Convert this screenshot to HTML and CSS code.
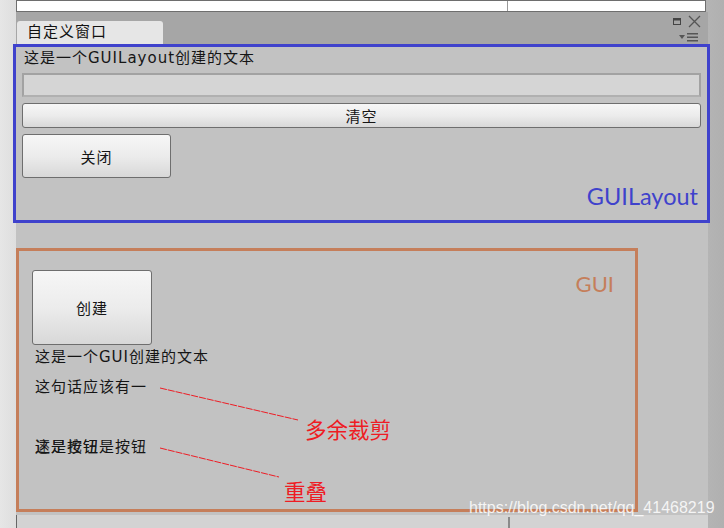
FILE: index.html
```html
<!DOCTYPE html>
<html lang="zh">
<head>
<meta charset="utf-8">
<link rel="stylesheet" href="styles.css">
</head>
<body>
<div class="screen">
  <div class="topbar"><span class="topbar-tick"></span></div>
  <div class="window">
    <div class="tabbar">
      <div class="tab">自定义窗口</div>
      <div class="tab-tools">
        <div class="tool-row">
          <svg class="ico-max" width="8" height="7" viewBox="0 0 8 7"><rect x="0.5" y="0.5" width="7" height="6" fill="none" stroke="#444" stroke-width="1"/><rect x="0.5" y="0.5" width="7" height="2" fill="#444"/></svg>
          <svg class="ico-close" width="13" height="13" viewBox="0 0 13 13"><path d="M1 1 L12 12 M12 1 L1 12" stroke="#555" stroke-width="1.3" fill="none"/></svg>
        </div>
        <div class="tool-row">
          <svg width="20" height="9" viewBox="0 0 20 9"><path d="M0 2 L6 2 L3 6 Z" fill="#555"/><rect x="8" y="0" width="11" height="1.5" fill="#555"/><rect x="8" y="3.5" width="11" height="1.5" fill="#555"/><rect x="8" y="7" width="11" height="1.5" fill="#555"/></svg>
        </div>
      </div>
    </div>
    <div class="layout-box">
      <div class="ui-label">这是一个GUILayout创建的文本</div>
      <div class="textfield"></div>
      <div class="btn btn-wide">清空</div>
      <div class="btn btn-close">关闭</div>
      <div class="tag tag-blue">GUILayout</div>
    </div>
    <div class="gui-box">
      <div class="tag tag-orange">GUI</div>
      <div class="btn btn-create">创建</div>
      <div class="ui-label gui-text">这是一个GUI创建的文本</div>
      <div class="ui-label gui-clip">这句话应该有一</div>
      <div class="overlap">
        <span class="ui-label ov-a">这是按钮是按钮</span>
        <span class="ui-label ov-b">还是也钮</span>
      </div>
    </div>
  </div>
  <div class="below"><span class="below-tick"></span></div>
</div>
<svg class="marks" width="724" height="528" viewBox="0 0 724 528">
  <line x1="160" y1="388" x2="298" y2="420" stroke="#ee1c24" stroke-width="1" stroke-dasharray="7 1"/>
  <line x1="160" y1="448" x2="279" y2="477" stroke="#ee1c24" stroke-width="1" stroke-dasharray="7 1"/>
</svg>
<div class="note note-clip">多余裁剪</div>
<div class="note note-overlap">重叠</div>
<div class="watermark">https://blog.csdn.net/qq_41468219</div>
</body>
</html>
```
FILE: styles.css
```css
html, body {
  margin: 0;
  padding: 0;
}
body {
  width: 724px;
  height: 528px;
  overflow: hidden;
  position: relative;
  background: linear-gradient(to right, #e6e6e6 0, #dedede 16px, #b4b4b4 708px, #b0b0b0 724px);
  font-family: "DejaVu Sans", "Noto Sans CJK SC", sans-serif;
}
.screen {
  display: flex;
  flex-direction: column;
}
.topbar {
  margin-left: 16px;
  width: 688px;
  height: 10px;
  background: #ffffff;
  border: 1px solid #6e6e6e;
  position: relative;
}
.topbar-tick {
  position: absolute;
  left: 490px;
  top: 0;
  width: 1px;
  height: 10px;
  background: #999;
}
.window {
  margin-left: 16px;
  width: 692px;
  height: 503px;
  background: #c2c2c2;
  display: flex;
  flex-direction: column;
}
.tabbar {
  height: 32px;
  background: #a6a6a6;
  display: flex;
  justify-content: space-between;
  align-items: flex-end;
}
.tab {
  margin-left: 1px;
  width: 146px;
  height: 23px;
  box-sizing: border-box;
  background: #e6e6e6;
  border-radius: 3px 3px 0 0;
  font-size: 15px;
  letter-spacing: 1px;
  line-height: 23px;
  padding-left: 10px;
  color: #111;
}
.tab-tools {
  display: flex;
  flex-direction: column;
  align-items: flex-end;
  padding-right: 9px;
  height: 32px;
  justify-content: space-between;
  padding-bottom: 2px;
  box-sizing: border-box;
  padding-top: 3px;
}
.tool-row {
  display: flex;
  align-items: center;
  gap: 7px;
}
.ico-close {
  margin-right: -2px;
}
.layout-box {
  margin-left: -3px;
  width: 697px;
  height: 179px;
  box-sizing: border-box;
  border: 3px solid #3f42cc;
  padding: 0 6px 0 6px;
  display: flex;
  flex-direction: column;
}
.ui-label {
  font-size: 15px;
  letter-spacing: 1px;
  color: #151515;
  white-space: nowrap;
}
.layout-box .ui-label {
  height: 22px;
  line-height: 22px;
  padding-left: 2px;
  margin-bottom: 4px;
}
.textfield {
  height: 24px;
  box-sizing: border-box;
  background: #d5d5d5;
  border: 2px solid #a2a2a2;
  border-bottom-color: #b0b0b0;
}
.btn {
  box-sizing: border-box;
  border: 1px solid #6e6e6e;
  border-radius: 3px;
  background: linear-gradient(to bottom, #f6f6f6 0%, #ececec 50%, #d8d8d8 100%);
  display: flex;
  align-items: center;
  justify-content: center;
  font-size: 15px;
  letter-spacing: 1px;
  color: #151515;
}
.btn-wide {
  margin-top: 6px;
  height: 25px;
}
.btn-close {
  margin-top: 6px;
  width: 149px;
  height: 44px;
}
.tag {
  font-family: Lato, "Open Sans", sans-serif;
  font-size: 23.5px;
  line-height: 26px;
  white-space: nowrap;
}
.tag-blue {
  color: #3f42cc;
  align-self: flex-end;
  margin-top: 5px;
  margin-right: 3px;
}
.gui-box {
  margin-top: 25px;
  width: 622px;
  height: 264px;
  box-sizing: border-box;
  border: 3px solid #c57e5a;
  position: relative;
  padding: 19px 0 0 13px;
  display: flex;
  flex-direction: column;
  align-items: flex-start;
}
.tag-orange {
  position: absolute;
  right: 21px;
  top: 20px;
  font-size: 22px;
  color: #c57e5a;
}
.btn-create {
  width: 120px;
  height: 75px;
}
.gui-text {
  margin-top: 2px;
  margin-left: 3px;
  line-height: 20px;
}
.gui-clip {
  margin-top: 10px;
  margin-left: 3px;
  line-height: 20px;
}
.overlap {
  margin-top: 40px;
  margin-left: 3px;
  position: relative;
  height: 20px;
  line-height: 20px;
}
.ov-a {
  display: block;
}
.ov-b {
  position: absolute;
  left: 0;
  top: 0;
  opacity: 0.8;
}
.below {
  margin-left: 16px;
  width: 692px;
  height: 13px;
  background: #d3d3d3;
  border-left: 1px solid #666;
  box-sizing: border-box;
  position: relative;
}
.below-tick {
  position: absolute;
  left: 491px;
  top: 2px;
  width: 2px;
  height: 11px;
  background: #8a8a8a;
}
.marks {
  position: absolute;
  left: 0;
  top: 0;
}
.note {
  position: absolute;
  color: #ee1c24;
  font-family: "Noto Sans CJK SC", sans-serif;
  font-size: 21.5px;
  line-height: 24px;
  white-space: nowrap;
}
.note-clip {
  left: 305px;
  top: 417px;
}
.note-overlap {
  left: 284px;
  top: 479px;
}
.watermark {
  position: absolute;
  left: 469px;
  top: 499px;
  font-family: "Liberation Sans", Arial, sans-serif;
  font-size: 16px;
  color: rgba(255, 255, 255, 0.85);
  white-space: nowrap;
}
```
